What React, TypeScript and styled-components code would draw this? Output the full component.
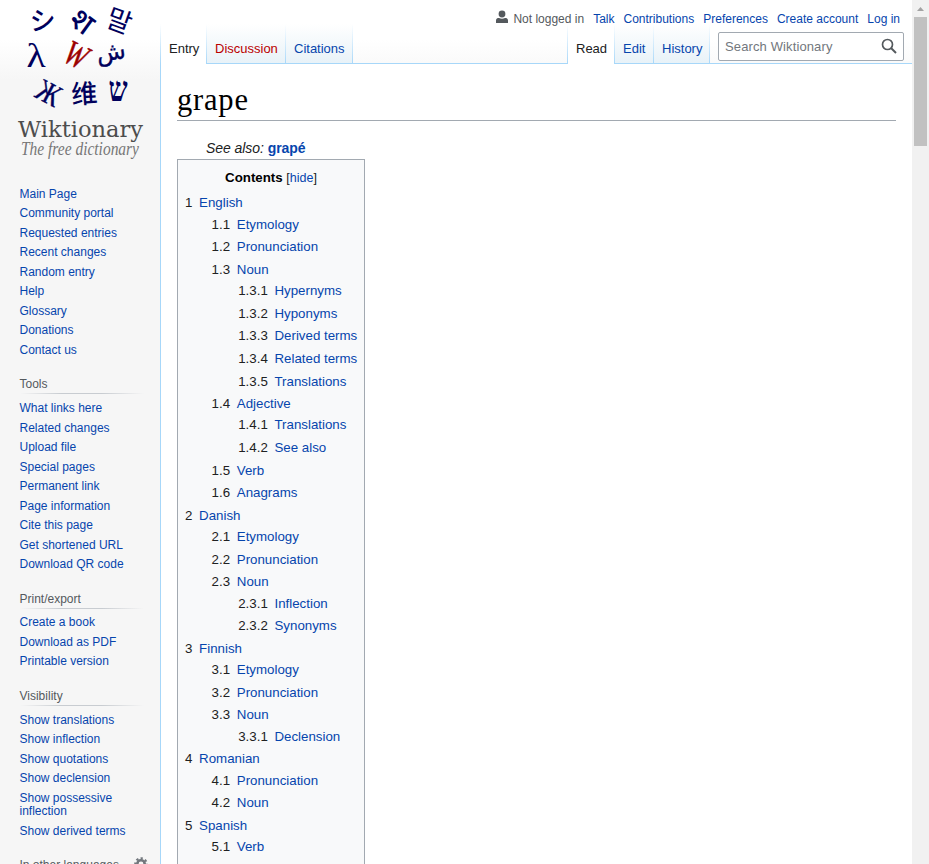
import React from "react";
import styled, { createGlobalStyle } from "styled-components";

const GlobalStyle = createGlobalStyle`
  html, body { margin: 0; height: 100%; overflow: hidden; }
  body { background: #f6f6f6; font-family: "Liberation Sans", Arial, sans-serif; color: #202122; }
  * { box-sizing: border-box; }
  ul { list-style: none; margin: 0; padding: 0; }
  h1, h2, h3, p { margin: 0; font-weight: 400; }
`;

const Window = styled.div`
  display: grid;
  grid-template-columns: 160px minmax(0, 1fr) 17px;
  height: 864px;
  overflow: hidden;
  background: linear-gradient(#fff 40px, #f6f6f6 80px) 0 0 / 100% 80px no-repeat #f6f6f6;
`;

const Link = styled.a<{ $missing?: boolean }>`
  color: ${(p) => (p.$missing ? "#ba0000" : "#0645ad")};
  text-decoration: none;
`;

const Sidebar = styled.aside`
  height: 864px;
  overflow: hidden;
  font-size: 12px;
`;

const Logo = styled.svg`
  display: block;
  width: 160px;
  height: 184.8px;
`;

const PortalHeading = styled.h3`
  display: flex;
  justify-content: space-between;
  height: 38.8px;
  margin: 0 12px 0 19.5px;
  padding-top: 14.2px;
  font-size: 12px;
  line-height: 20px;
  color: #54595d;
  background: linear-gradient(to right, rgba(200, 204, 209, 0), #c8ccd1 33%, #c8ccd1 66%, rgba(200, 204, 209, 0)) 0 33.2px / 124px 1px no-repeat;
`;

const PortalList = styled.ul`
  margin: 0 17px 0 19.5px;
`;

const PortalItem = styled.li`
  line-height: 13.5px;
  padding: 3px 0;
`;

const Cog = styled.svg`
  width: 14px;
  height: 14px;
  margin-top: 2px;
`;

const Main = styled.main`
  display: flex;
  flex-direction: column;
  min-width: 0;
`;

const Header = styled.header`
  height: 64px;
  flex: none;
  background: linear-gradient(#a7d7f9, #a7d7f9) 0 63px / 100% 1px no-repeat;
`;

const Personal = styled.ul`
  display: flex;
  justify-content: flex-end;
  align-items: center;
  gap: 9px;
  height: 24px;
  padding: 13px 12px 0 0;
  font-size: 12px;
  line-height: 14px;
`;

const LoggedOut = styled.li`
  display: flex;
  align-items: center;
  gap: 5px;
  color: #54595d;
  svg { width: 12px; height: 14px; margin-top: -3px; }
`;

const NavRow = styled.div`
  display: flex;
  height: 40px;
`;

const Tabs = styled.ul`
  display: flex;
  padding-left: 1px;
  background: linear-gradient(#fff, #a7d7f9) 0 0 / 1px 100% no-repeat;
`;

const Tab = styled.li<{ $w: number; $active?: boolean }>`
  width: ${(p) => p.$w}px;
  height: 40px;
  padding: 17px 0 0 8px;
  font-size: 13px;
  line-height: 15px;
  white-space: nowrap;
  background:
    linear-gradient(#fff, #a7d7f9) 100% 0 / 1px 100% no-repeat,
    ${(p) => (p.$active ? "linear-gradient(#fff, #fff)" : "linear-gradient(#fff, #e8f2f8) 0 0 / 100% 39px no-repeat")};
`;

const Search = styled.div`
  display: flex;
  align-items: center;
  justify-content: space-between;
  width: 186px;
  height: 29px;
  margin: 8px 8px 0 8px;
  padding: 0 6px;
  border: 1px solid #a2a9b1;
  border-radius: 2px;
  background: #fff;
  color: #72777d;
  font-size: 13px;
  letter-spacing: 0.12px;
  svg { width: 16px; height: 16px; margin-top: -2px; }
`;

const Spacer = styled.div`
  flex: 1;
`;

const Content = styled.article`
  flex: 1;
  min-height: 0;
  background: #fff;
  border-left: 1px solid #a7d7f9;
  padding: 16px 16px 0;
`;

const Title = styled.h1`
  height: 41px;
  border-bottom: 1px solid #a2a9b1;
  font-family: "Liberation Serif", Georgia, serif;
  font-size: 30.5px;
  line-height: 40px;
  letter-spacing: 0.8px;
  color: #000;
`;

const SeeAlso = styled.p`
  height: 38px;
  padding: 17px 0 0 29px;
  font-size: 14px;
  line-height: 20px;
  font-style: italic;
  letter-spacing: -0.06px;
  b { font-style: normal; }
`;

const Toc = styled.nav`
  width: 188px;
  height: 760px;
  border: 1px solid #a2a9b1;
  background: #f8f9fa;
  padding: 7px;
  font-size: 13.3px;
  line-height: 21.28px;
  white-space: nowrap;
`;

const TocTitle = styled.div`
  text-align: center;
  color: #000;
  margin-bottom: 3.1px;
  span { font-size: 12.5px; color: #202122; }
`;

const TocList = styled.ul<{ $nested?: boolean }>`
  margin-left: ${(p) => (p.$nested ? 26.6 : 0)}px;
`;

const TocItem = styled.li`
  margin-bottom: 1.33px;
`;

const TocNumber = styled.span`
  padding-right: 6.7px;
`;

const Scrollbar = styled.div`
  display: flex;
  flex-direction: column;
  justify-content: space-between;
  background: #f1f1f1;
`;

const Thumb = styled.div`
  width: 13px;
  height: 129px;
  margin-left: 2px;
  background: #c1c1c1;
`;

const Arrow = styled.svg`
  display: block;
  width: 17px;
  height: 17px;
`;

type Entry = [string, Entry[]?];

const contents: Entry[] = [
  ["English", [
    ["Etymology"], ["Pronunciation"],
    ["Noun", [["Hypernyms"], ["Hyponyms"], ["Derived terms"], ["Related terms"], ["Translations"]]],
    ["Adjective", [["Translations"], ["See also"]]],
    ["Verb"], ["Anagrams"],
  ]],
  ["Danish", [["Etymology"], ["Pronunciation"], ["Noun", [["Inflection"], ["Synonyms"]]]]],
  ["Finnish", [["Etymology"], ["Pronunciation"], ["Noun", [["Declension"]]]]],
  ["Romanian", [["Pronunciation"], ["Noun"]]],
  ["Spanish", [["Verb"]]],
];

function Entries({ items, prefix = "" }: { items: Entry[]; prefix?: string }) {
  return (
    <TocList $nested={prefix !== ""}>
      {items.map(([name, children], i) => (
        <TocItem key={name}>
          <TocNumber>{prefix}{i + 1}</TocNumber><Link>{name}</Link>
          {children && <Entries items={children} prefix={`${prefix}${i + 1}.`} />}
        </TocItem>
      ))}
    </TocList>
  );
}

const navigation = ["Main Page", "Community portal", "Requested entries", "Recent changes", "Random entry", "Help", "Glossary", "Donations", "Contact us"];

const portals: [string, string[]][] = [
  ["Tools", ["What links here", "Related changes", "Upload file", "Special pages", "Permanent link", "Page information", "Cite this page", "Get shortened URL", "Download QR code"]],
  ["Print/export", ["Create a book", "Download as PDF", "Printable version"]],
  ["Visibility", ["Show translations", "Show inflection", "Show quotations", "Show declension", "Show possessive inflection", "Show derived terms"]],
];

function Links({ items }: { items: string[] }) {
  return <PortalList>{items.map((t) => <PortalItem key={t}><Link>{t}</Link></PortalItem>)}</PortalList>;
}

function WiktionaryLogo() {
  return (
    <Logo viewBox="0 0 160 184.8">
      <g fill="#00005c" textAnchor="middle">
        <text transform="translate(43 30) rotate(-2)" fontSize="26" fontWeight="500" fontFamily="Noto Sans CJK JP, sans-serif">シ</text>
        <text transform="translate(76 30) rotate(36)" fontSize="31" fontWeight="500" fontFamily="Noto Sans, sans-serif">श</text>
        <text transform="translate(116 30) rotate(20)" fontSize="27" fontFamily="Noto Sans CJK KR, sans-serif">말</text>
        <text transform="translate(36 67) scale(1.2 1)" fontSize="33" fontFamily="Liberation Serif, serif">λ</text>
        <text transform="translate(112 60) rotate(-8)" fontSize="24" stroke="#00005c" strokeWidth=".3" fontFamily="DejaVu Sans, sans-serif">ش</text>
        <text transform="translate(44 102) rotate(28) scale(.85 1)" fontSize="31" stroke="#00005c" strokeWidth=".4" fontFamily="Liberation Serif, serif">Ж</text>
        <text transform="translate(85 103) rotate(-4)" fontSize="26" fontWeight="500" fontFamily="Noto Sans CJK SC, sans-serif">维</text>
        <text transform="translate(118 101) scale(1 1.3)" fontSize="27" fontWeight="700" fontFamily="Liberation Serif, serif">ש</text>
      </g>
      <text transform="translate(71 65) rotate(26) scale(.85 1.12)" textAnchor="middle" fill="#9c0000" stroke="#9c0000" strokeWidth=".5" fontSize="31" fontStyle="italic" fontFamily="Liberation Serif, serif">W</text>
      <text x="18" y="137.500" textLength="125" lengthAdjust="spacingAndGlyphs" fill="#4d4d4d" fontSize="23" fontFamily="DejaVu Serif, serif">Wiktionary</text>
      <text x="21" y="155" textLength="118" lengthAdjust="spacingAndGlyphs" fill="#777" fontSize="18" fontStyle="italic" fontFamily="Liberation Serif, serif">The free dictionary</text>
    </Logo>
  );
}

export default function App() {
  return (
    <>
      <GlobalStyle />
      <Window>
        <Sidebar>
          <WiktionaryLogo />
          <Links items={navigation} />
          {portals.map(([name, items]) => (
            <React.Fragment key={name}>
              <PortalHeading>{name}</PortalHeading>
              <Links items={items} />
            </React.Fragment>
          ))}
          <PortalHeading>
            In other languages
            <Cog viewBox="0 0 14 14">
              <circle cx="7" cy="7" r="3.700" fill="none" stroke="#72777d" strokeWidth="2.600" />
              <circle cx="7" cy="7" r="5.700" fill="none" stroke="#72777d" strokeWidth="2.200" strokeDasharray="2.240 2.240" strokeDashoffset="1.120" />
            </Cog>
          </PortalHeading>
        </Sidebar>
        <Main>
          <Header>
            <Personal>
              <LoggedOut>
                <svg viewBox="0 0 12 14" fill="#54595d"><circle cx="6" cy="4" r="3.400" /><path d="M0 13v-2.500C0 8.500 1.500 8 3 8c2 1 4 1 6 0 1.500 0 3 .5 3 2.500V13z" /></svg>
                Not logged in
              </LoggedOut>
              {["Talk", "Contributions", "Preferences", "Create account", "Log in"].map((t) => <li key={t}><Link>{t}</Link></li>)}
            </Personal>
            <NavRow>
              <Tabs>
                <Tab $w={46} $active>Entry</Tab>
                <Tab $w={79}><Link $missing>Discussion</Link></Tab>
                <Tab $w={67}><Link>Citations</Link></Tab>
              </Tabs>
              <Spacer />
              <Tabs>
                <Tab $w={47} $active>Read</Tab>
                <Tab $w={39}><Link>Edit</Link></Tab>
                <Tab $w={56}><Link>History</Link></Tab>
              </Tabs>
              <Search>
                Search Wiktionary
                <svg viewBox="0 0 16 16" fill="none" stroke="#54595d" strokeWidth="1.700"><circle cx="6.500" cy="6.500" r="5" /><path d="M10 10l5 5" strokeWidth="2" /></svg>
              </Search>
            </NavRow>
          </Header>
          <Content>
            <Title>grape</Title>
            <SeeAlso>See also: <b><Link>grapé</Link></b></SeeAlso>
            <Toc>
              <TocTitle><b>Contents</b> <span>[<Link>hide</Link>]</span></TocTitle>
              <Entries items={contents} />
            </Toc>
          </Content>
        </Main>
        <Scrollbar>
          <div>
            <Arrow viewBox="0 0 17 17"><path d="M5 11l3.500-4 3.500 4z" fill="#a3a3a3" /></Arrow>
            <Thumb />
          </div>
          <Arrow viewBox="0 0 17 17"><path d="M5 6h7l-3.500 4z" fill="#505050" /></Arrow>
        </Scrollbar>
      </Window>
    </>
  );
}
